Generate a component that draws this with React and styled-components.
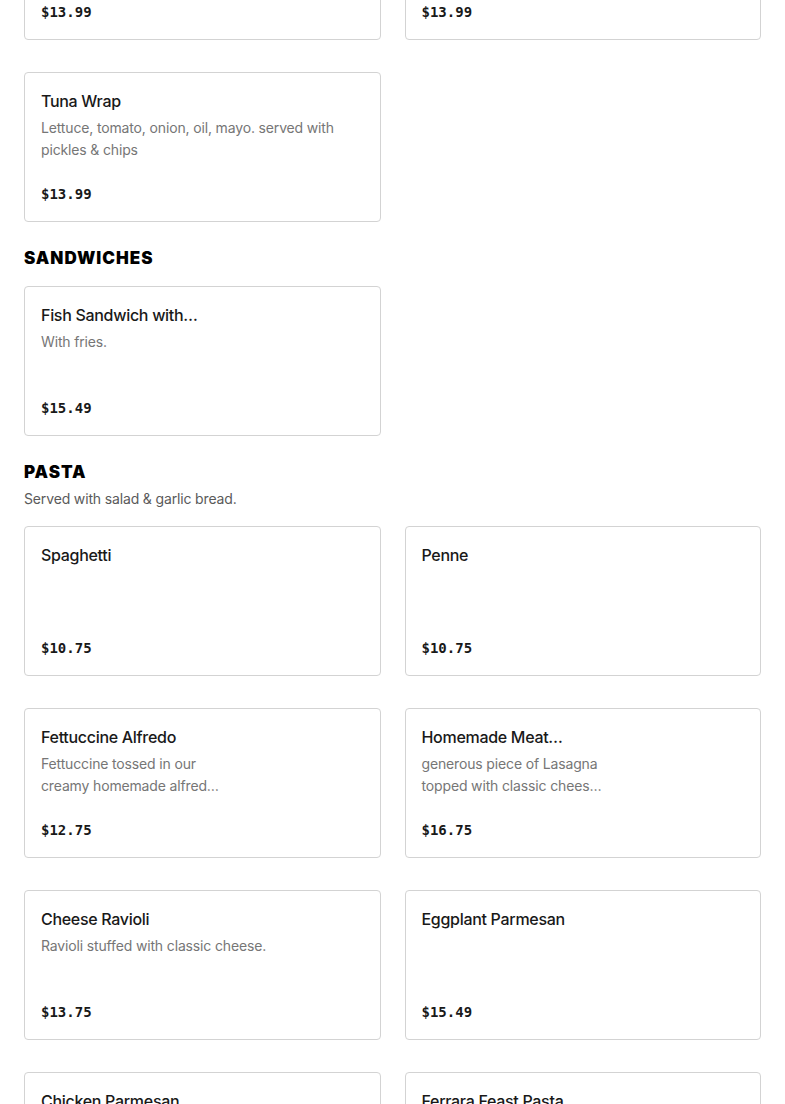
import React from 'react'
import styled, {createGlobalStyle} from 'styled-components'

const GlobalStyle = createGlobalStyle`
    html, body {
        margin: 0;
        padding: 0;
        background: #ffffff;
    }
    body {
        font-family: Inter, "Noto Sans", "Liberation Sans", sans-serif;
        color: #191919;
        overflow: hidden;
    }
`

const Menu = styled.div`
    padding: 0 24px;
    margin-top: -110px;
`

const Section = styled.section`
    & + & {
        margin-top: 24px;
    }
`

const SectionHeader = styled.div`
    margin-bottom: ${props => (props.$hasNote ? '17px' : '16px')};
`

const SectionTitle = styled.h2`
    margin: 0;
    font-family: Inter, "DejaVu Sans", sans-serif;
    font-weight: 900;
    font-size: 17px;
    line-height: 24px;
    color: #000;
    letter-spacing: 1px;
`

const SectionNote = styled.p`
    margin: 5px 0 0;
    font-size: 14px;
    line-height: 20px;
    letter-spacing: -0.15px;
    color: #5a5a5a;
`

const Grid = styled.div`
    display: grid;
    grid-template-columns: 1fr 1fr;
    column-gap: 24px;
    row-gap: 32px;
`

const Card = styled.div`
    box-sizing: border-box;
    height: 150px;
    border: 1px solid #d3d3d3;
    border-radius: 4px;
    padding: 16px 16px 15px;
    display: flex;
    flex-direction: column;
    background: #fff;
`

const ItemText = styled.div`
    display: flex;
    flex-direction: column;
    max-width: ${props => (props.$narrow ? '200px' : 'none')};
`

const ItemName = styled.div`
    font-size: 16px;
    font-weight: 500;
    line-height: 24px;
    letter-spacing: -0.3px;
    color: #191919;
    white-space: nowrap;
`

const ItemDescription = styled.div`
    margin-top: 4px;
    font-size: 14px;
    line-height: 22px;
    letter-spacing: -0.15px;
    color: #767676;
    white-space: pre-line;
`

const Price = styled.div`
    margin-top: auto;
    font-family: "DejaVu Sans Mono", "Liberation Mono", monospace;
    font-weight: 700;
    font-size: 14px;
    line-height: 24px;
    color: #191919;
`

const sections = [
    {
        title: 'WRAPS',
        hidden: true,
        items: [
            {name: 'Chicken Caesar Wrap', price: '$13.99'},
            {name: 'Turkey Club Wrap', price: '$13.99'},
            {name: 'Tuna Wrap', description: 'Lettuce, tomato, onion, oil, mayo. served with\npickles & chips', price: '$13.99'},
        ],
    },
    {
        title: 'SANDWICHES',
        items: [
            {name: 'Fish Sandwich with…', description: 'With fries.', price: '$15.49', narrow: true},
        ],
    },
    {
        title: 'PASTA',
        note: 'Served with salad & garlic bread.',
        items: [
            {name: 'Spaghetti', price: '$10.75'},
            {name: 'Penne', price: '$10.75'},
            {name: 'Fettuccine Alfredo', description: 'Fettuccine tossed in our\ncreamy homemade alfred…', price: '$12.75', narrow: true},
            {name: 'Homemade Meat…', description: 'generous piece of Lasagna\ntopped with classic chees…', price: '$16.75', narrow: true},
            {name: 'Cheese Ravioli', description: 'Ravioli stuffed with classic cheese.', price: '$13.75'},
            {name: 'Eggplant Parmesan', price: '$15.49'},
            {name: 'Chicken Parmesan', price: '$16.49'},
            {name: 'Ferrara Feast Pasta', price: '$18.99'},
        ],
    },
]

const MenuItem = ({item}) => (
    <Card>
        <ItemText $narrow={item.narrow}>
            <ItemName>{item.name}</ItemName>
            {item.description && <ItemDescription>{item.description}</ItemDescription>}
        </ItemText>
        <Price>{item.price}</Price>
    </Card>
)

const App = () => {
    return (
        <>
            <GlobalStyle />
            <Menu>
                {sections.map(section => (
                    <Section key={section.title}>
                        {!section.hidden && (
                            <SectionHeader $hasNote={!!section.note}>
                                <SectionTitle>{section.title}</SectionTitle>
                                {section.note && <SectionNote>{section.note}</SectionNote>}
                            </SectionHeader>
                        )}
                        <Grid>
                            {section.items.map(item => (
                                <MenuItem key={item.name} item={item} />
                            ))}
                        </Grid>
                    </Section>
                ))}
            </Menu>
        </>
    )
}

export default App
